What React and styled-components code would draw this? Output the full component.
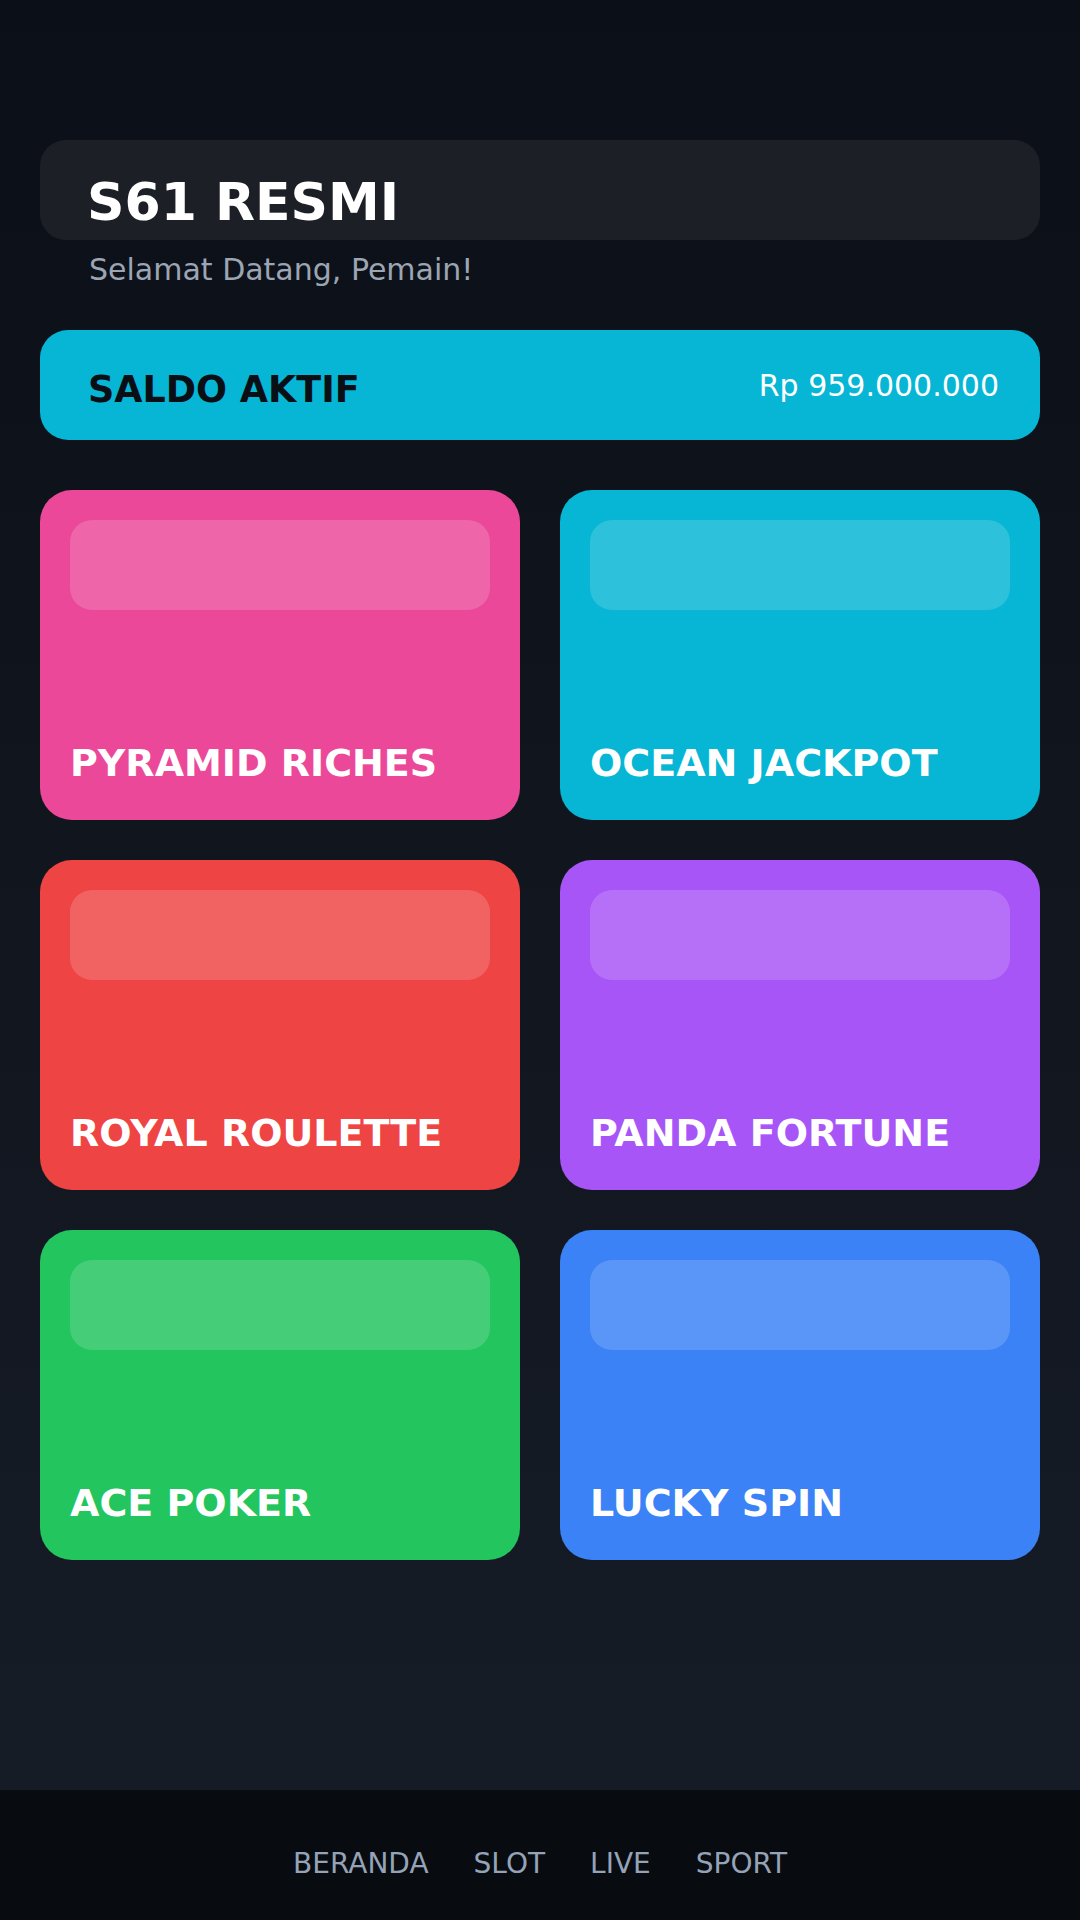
import React from "react";
import styled, { createGlobalStyle } from "styled-components";

const GlobalStyle = createGlobalStyle`
  * {
    box-sizing: border-box;
  }

  html,
  body {
    margin: 0;
    padding: 0;
  }

  body {
    font-family: "DejaVu Sans", "Noto Sans", sans-serif;
    background: #0b0f17;
  }
`;

const Page = styled.div`
  min-height: 100vh;
  display: flex;
  flex-direction: column;
  background: linear-gradient(180deg, #0b0f17 0%, #171d27 100%);
`;

const Main = styled.main`
  flex: 1;
  padding: 140px 40px 0;
`;

const HeaderBox = styled.div`
  height: 100px;
  padding: 32px 47px 0;
  background-color: #1c1f26;
  border-radius: 26px;
`;

const Title = styled.h1`
  margin: 0;
  font-size: 52px;
  font-weight: bold;
  line-height: normal;
  color: #ffffff;
`;

const Subtitle = styled.p`
  margin: 12px 0 0;
  padding-left: 49px;
  font-size: 30px;
  line-height: normal;
  color: #9ca5b3;
`;

const BalanceCard = styled.div`
  display: flex;
  align-items: center;
  justify-content: space-between;
  height: 110px;
  margin-top: 43px;
  padding: 0 41px 0 48px;
  background-color: #06b6d4;
  border-radius: 28px;
`;

const BalanceLabel = styled.span`
  padding-top: 8px;
  font-size: 36.5px;
  font-weight: bold;
  color: #0a0f16;
`;

const BalanceValue = styled.span`
  font-size: 30px;
  color: #ffffff;
`;

const GameGrid = styled.div`
  display: grid;
  grid-template-columns: repeat(2, 1fr);
  gap: 40px;
  margin-top: 50px;
`;

const GameCard = styled.div`
  display: flex;
  flex-direction: column;
  justify-content: space-between;
  height: 330px;
  padding: 30px 30px 33px;
  background-color: ${(p) => p.color};
  border-radius: 32px;
`;

const GameThumb = styled.div`
  height: 90px;
  background-color: rgba(255, 255, 255, 0.16);
  border-radius: 22px;
`;

const GameName = styled.h3`
  margin: 0;
  font-size: 38px;
  font-weight: bold;
  line-height: 1.2;
  color: #ffffff;
`;

const BottomNav = styled.nav`
  display: flex;
  align-items: center;
  justify-content: center;
  gap: 45px;
  height: 130px;
  padding-top: 16px;
  background-color: #080b0f;
`;

const NavItem = styled.span`
  font-size: 28px;
  color: #94a3b8;
`;

const games = [
  { name: "PYRAMID RICHES", color: "#ec4899" },
  { name: "OCEAN JACKPOT", color: "#06b6d4" },
  { name: "ROYAL ROULETTE", color: "#ef4444" },
  { name: "PANDA FORTUNE", color: "#a855f7" },
  { name: "ACE POKER", color: "#22c55e" },
  { name: "LUCKY SPIN", color: "#3b82f6" },
];

const navItems = ["BERANDA", "SLOT", "LIVE", "SPORT"];

function App() {
  return (
    <>
      <GlobalStyle />
      <Page>
        <Main>
          <HeaderBox>
            <Title>S61 RESMI</Title>
          </HeaderBox>
          <Subtitle>Selamat Datang, Pemain!</Subtitle>

          <BalanceCard>
            <BalanceLabel>SALDO AKTIF</BalanceLabel>
            <BalanceValue>Rp 959.000.000</BalanceValue>
          </BalanceCard>

          <GameGrid>
            {games.map((game) => (
              <GameCard key={game.name} color={game.color}>
                <GameThumb />
                <GameName>{game.name}</GameName>
              </GameCard>
            ))}
          </GameGrid>
        </Main>

        <BottomNav>
          {navItems.map((item) => (
            <NavItem key={item}>{item}</NavItem>
          ))}
        </BottomNav>
      </Page>
    </>
  );
}

export default App;
